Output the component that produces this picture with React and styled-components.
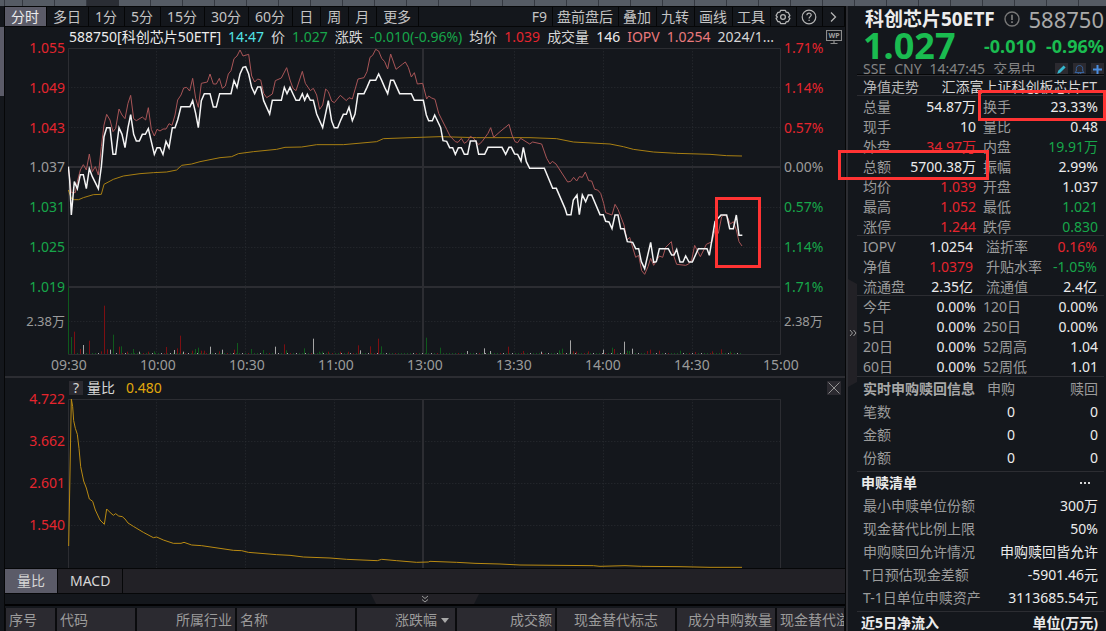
import React from "react";
import styled, { createGlobalStyle } from "styled-components";

const c = {
  bg: "#14171c",
  panel: "#222126",
  cell: "#2b2a30",
  active: "#5b5b68",
  line: "#2c2d32",
  grid: "#2a2d32",
  text: "#d6d6d6",
  white: "#ececec",
  dim: "#9b9b9b",
  red: "#e5252e",
  green: "#17a64a",
  cyan: "#52e4e6",
  pink: "#ea7a7c",
  gold: "#e0a80c",
  mark: "#ff3333",
};

const Global = createGlobalStyle`
  * { box-sizing: border-box; }
  body {
    margin: 0;
    background: ${c.bg};
    color: ${c.text};
    font: 14px/20px "Noto Sans", "Noto Sans CJK SC", sans-serif;
    overflow: hidden;
  }
  button { font: inherit; color: inherit; border: 0; background: none; padding: 0; margin: 0; }
  table { border-collapse: collapse; border-spacing: 0; }
  th { font-weight: 400; }
  svg { display: block; }
`;

const Page = styled.div`
  height: 100vh;
  display: flex;
  flex-direction: column;
  overflow: hidden;
`;

const TopStrip = styled.div`
  flex: none;
  height: 6px;
  background: linear-gradient(90deg, transparent 87px, #2a2d34 87px, #2a2d34 119px, transparent 119px),
    repeating-linear-gradient(90deg, #343840 0 1px, #555b64 1px 32px) 22px 0;
`;

const Workspace = styled.div`
  flex: 1;
  min-height: 0;
  display: flex;
`;

const EdgeRail = styled.div`
  flex: none;
  width: 5px;
  padding-top: 21px;
  border-right: 1px solid #060708;
`;

const RailThumb = styled.div`
  height: 69px;
  background: ${c.active};
`;

const Main = styled.main`
  flex: 1;
  min-width: 0;
  display: flex;
  flex-direction: column;
`;

const Toolbar = styled.nav`
  flex: none;
  height: 21px;
  display: flex;
  justify-content: space-between;
  border-top: 1px solid #060708;
  border-bottom: 1px solid #060708;
`;

const ToolGroup = styled.div`
  display: flex;
`;

const ToolButton = styled.button`
  display: flex;
  align-items: center;
  justify-content: center;
  white-space: nowrap;
  line-height: 19px;
  padding: 0 ${(p) => (p.$tight ? "5px 0 4px" : "7px 0 6px")};
  border-right: 1px solid #050607;
  color: ${(p) => (p.$active ? c.white : "#c4c4c4")};
  background: ${(p) => (p.$active ? c.active : "transparent")};
`;

const InfoBar = styled.header`
  flex: none;
  height: 21px;
  display: flex;
  align-items: center;
  justify-content: space-between;
  padding: 0 3px 2px 64px;
`;

const InfoItems = styled.div`
  display: flex;
  gap: 7px;
  white-space: nowrap;
`;

const Tone = styled.span`
  color: ${(p) => c[p.$tone] || c.text};
`;

const ChartRow = styled.section`
  flex: none;
  display: grid;
  grid-template-columns: 63px minmax(0, 1fr) 63px;
  height: ${(p) => p.$height}px;
`;

const Plot = styled.div`
  position: relative;
  height: 100%;
`;

const PlotSvg = styled.svg`
  width: 100%;
  height: 100%;
  path, line, polyline { vector-effect: non-scaling-stroke; fill: none; }
`;

const AxisColumn = styled.div`
  margin-top: -7px;
  padding: ${(p) => (p.$side === "left" ? "0 3px 0 0" : "0 0 0 2px")};
  text-align: ${(p) => (p.$side === "left" ? "right" : "left")};
  line-height: 14px;
`;

const AxisScale = styled.div`
  height: ${(p) => p.$height}px;
  display: flex;
  flex-direction: column;
  justify-content: space-between;
`;

const VolumeLabel = styled.div`
  margin-top: 20px;
  font-size: 13px;
  color: ${c.dim};
`;

const TimeAxis = styled.div`
  flex: none;
  height: 21px;
  line-height: 19px;
  display: flex;
  justify-content: space-between;
  padding: 0 44px;
  color: ${c.dim};
  span { width: 40px; text-align: center; }
`;

const Marker = styled.div`
  position: absolute;
  left: ${(p) => p.$left};
  top: ${(p) => p.$top}px;
  width: ${(p) => p.$width}px;
  height: ${(p) => p.$height}px;
  border: 3px solid ${c.mark};
  pointer-events: none;
`;

const IndicatorBar = styled.header`
  flex: none;
  height: 23px;
  display: flex;
  align-items: center;
  padding: 0 4px 1px 64px;
  border-top: 2px solid ${c.line};
`;

const SmallButton = styled.button`
  width: 14px;
  height: 14px;
  display: grid;
  place-items: center;
  line-height: 14px;
  background: ${c.cell};
`;

const IndicatorName = styled.span`
  margin: 0 11px 0 4px;
`;

const Spacer = styled.span`
  flex: 1;
`;

const TabBar = styled.div`
  flex: none;
  height: 26px;
  display: flex;
  background: ${c.panel};
  border-top: 1px solid #060708;
  border-bottom: 1px solid #060708;
`;

const Tab = styled.button`
  padding: 0 12px;
  border-right: 1px solid #060708;
  background: ${(p) => (p.$active ? c.active : "transparent")};
`;

const HandleRow = styled.div`
  flex: none;
  height: 12px;
  display: flex;
  justify-content: center;
  border-bottom: 2px solid #020203;
`;

const Handle = styled.button`
  width: 108px;
  height: 10px;
  display: grid;
  place-items: center;
  background: ${c.panel};
  clip-path: polygon(0 0, 100% 0, calc(100% - 5px) 100%, 5px 100%);
`;

const HoldingsWrap = styled.div`
  flex: 1;
  min-height: 25px;
  overflow: hidden;
  padding-top: 2px;
`;

const Holdings = styled.table`
  width: 100%;
  table-layout: fixed;
  border-collapse: separate;
  th {
    height: 23px;
    padding: 0 3px;
    overflow: hidden;
    white-space: nowrap;
    color: ${c.dim};
    background: ${c.cell};
    background-clip: padding-box;
    border: 1px solid #0a0b0d;
    border-width: 0 1px;
  }
`;

const Column = styled.col`
  width: ${(p) => (p.$width ? `${p.$width}px` : "auto")};
`;

const HeadCell = styled.th`
  text-align: ${(p) => p.$align || "left"};
`;

const SortMark = styled.svg`
  display: inline;
`;

const Sidebar = styled.aside`
  flex: none;
  position: relative;
  width: 261px;
  display: flex;
  border-left: 1px solid #060708;
`;

const Gutter = styled.div`
  flex: none;
  width: 11px;
  padding-top: 273px;
  border-left: 2px solid ${c.line};
`;

const CollapseButton = styled.button`
  width: 9px;
  height: 108px;
  display: grid;
  place-items: center;
  background: ${c.panel};
  clip-path: polygon(0 0, 100% 5px, 100% calc(100% - 5px), 0 100%);
`;

const Quote = styled.div`
  flex: 1;
  min-width: 0;
  padding-right: 2px;
`;

const QuoteHead = styled.header`
  height: 69px;
  padding-left: 6px;
  overflow: hidden;
  border-bottom: 1px solid #060708;
`;

const HeadLine = styled.div`
  display: flex;
  align-items: center;
  justify-content: space-between;
  white-space: nowrap;
  height: ${(p) => p.$height}px;
  padding-left: ${(p) => p.$inset || 0}px;
`;

const FundName = styled.h1`
  margin: 0;
  font-size: 19px;
  line-height: 26px;
  color: ${c.white};
`;

const FundCode = styled.span`
  font-size: 22px;
  line-height: 26px;
  color: #a9a9a9;
`;

const Price = styled.strong`
  margin-right: auto;
  font-size: 36px;
  line-height: 26px;
  color: #1abc50;
`;

const Change = styled.strong`
  margin-left: 10px;
  font-size: 18px;
  line-height: 26px;
  color: #1abc50;
`;

const Status = styled.div`
  display: flex;
  gap: 8px;
  color: #858585;
`;

const IconRow = styled.div`
  display: flex;
  gap: 5px;
`;

const IconButton = styled.button`
  width: 13px;
  height: 13px;
  display: grid;
  place-items: center;
  background: ${c.cell};
`;

const TrendRow = styled.div`
  display: flex;
  justify-content: space-between;
  height: 20px;
  padding: 1px 7px 0 6px;
  overflow: hidden;
  white-space: nowrap;
  color: #b4b4b4;
  border-top: 1px solid ${c.line};
`;

const Block = styled.section`
  border-top: 1px solid ${c.line};
  margin-top: ${(p) => (p.$joined ? -1 : 0)}px;
  padding: 0 6px ${(p) => p.$after || 0}px;
`;

const ListBlock = styled.section`
  padding: 0 6px 2px;
`;

const DataTable = styled.table`
  width: 100%;
  table-layout: fixed;
  th, td { padding: 0; white-space: nowrap; height: ${(p) => p.$row}px; line-height: 19px; }
  th { text-align: left; color: ${c.dim}; }
  td { text-align: right; }
`;

const Label = styled.th`
  && { padding-left: ${(p) => p.$inset || 0}px; }
`;

const Value = styled.td`
  color: ${(p) => c[p.$tone] || c.white};
  && { padding-right: ${(p) => p.$inset || 0}px; }
`;

const StrongHead = styled.th`
  && { font-weight: 700; color: #a8a8a8; }
`;

const RightHead = styled.th`
  && { text-align: right; }
`;

const SectionTitle = styled.div`
  display: flex;
  align-items: center;
  justify-content: space-between;
  height: 23px;
  padding: 0 6px 0 4px;
  font-weight: 700;
  color: ${c.white};
  border-top: 1px solid ${c.line};
`;

const MoreButton = styled.button`
  margin-right: 8px;
`;

const periods = ["分时", "多日", "1分", "5分", "15分", "30分", "60分", "日", "周", "月", "更多"];
const tools = ["F9", "盘前盘后", "叠加", "九转", "画线", "工具"];

const infoItems = [
  ["588750[科创芯片50ETF]", "white"],
  ["14:47", "cyan"],
  ["价"],
  ["1.027", "green"],
  ["涨跌"],
  ["-0.010(-0.96%)", "green"],
  ["均价"],
  ["1.039", "red"],
  ["成交量"],
  ["146", "white"],
  ["IOPV", "pink"],
  ["1.0254", "pink"],
  ["2024/1..."],
];

const priceTicks = [
  ["1.055", "1.71%", "red"],
  ["1.049", "1.14%", "red"],
  ["1.043", "0.57%", "red"],
  ["1.037", "0.00%", "dim"],
  ["1.031", "0.57%", "green"],
  ["1.025", "1.14%", "green"],
  ["1.019", "1.71%", "green"],
];

const times = ["09:30", "10:00", "10:30", "11:00", "13:00", "13:30", "14:00", "14:30", "15:00"];

const columns = [
  ["序号", 51],
  ["代码", 80],
  ["所属行业", 100, "right"],
  ["名称", 120],
  ["涨跌幅", 100, "right"],
  ["成交额", 100, "right"],
  ["现金替代标志", 120, "center"],
  ["成分申购数量", 100, "right"],
  ["现金替代溢价比例", 0],
];

const quoteRows = [
  ["总量", "54.87万", "white", "换手", "23.33%", "white"],
  ["现手", "10", "white", "量比", "0.48", "white"],
  ["外盘", "34.97万", "red", "内盘", "19.91万", "green"],
  ["总额", "5700.38万", "white", "振幅", "2.99%", "white"],
  ["均价", "1.039", "red", "开盘", "1.037", "white"],
  ["最高", "1.052", "red", "最低", "1.021", "green"],
  ["涨停", "1.244", "red", "跌停", "0.830", "green"],
];
const navRows = [
  ["IOPV", "1.0254", "white", "溢折率", "0.16%", "red"],
  ["净值", "1.0379", "red", "升贴水率", "-1.05%", "green"],
  ["流通盘", "2.35亿", "white", "流通值", "2.4亿", "white"],
];
const returnRows = [
  ["今年", "0.00%", "white", "120日", "0.00%", "white"],
  ["5日", "0.00%", "white", "250日", "0.00%", "white"],
  ["20日", "0.00%", "white", "52周高", "1.04", "white"],
  ["60日", "0.00%", "white", "52周低", "1.01", "white"],
];
const listRows = [
  ["最小申赎单位份额", "300万"],
  ["现金替代比例上限", "50%"],
  ["申购赎回允许情况", "申购赎回皆允许"],
  ["T日预估现金差额", "-5901.46元"],
  ["T-1日单位申赎资产", "3113685.54元"],
];

// Chart space uses three units per pixel.
const pricePoints =
  "205,500 209,540 214,645 218,600 223,545 232,566 241,524 250,524 259,566 268,506 277,530 295,566 304,500 312,410 320,383 330,383 339,463 347,463 357,383 366,403 375,443 384,383 392,344 401,403 409,423 418,423 427,403 436,403 445,386 454,425 463,463 471,443 480,443 489,463 498,424 507,443 517,383 525,383 533,360 543,320 570,320 578,302 587,340 595,383 604,302 613,281 630,281 640,321 649,321 659,281 693,281 702,242 711,262 720,222 729,202 737,200 746,222 755,262 764,281 773,261 782,261 791,302 800,322 809,342 817,301 844,301 853,262 861,281 870,262 879,282 888,301 898,301 907,281 914,301 922,283 931,301 940,301 950,342 968,383 977,340 985,302 995,363 1003,383 1013,383 1021,363 1030,343 1039,343 1047,322 1057,362 1065,342 1074,281 1092,281 1101,262 1110,241 1127,241 1136,222 1145,241 1154,262 1163,281 1172,241 1181,241 1199,281 1234,281 1243,301 1270,301 1279,345 1286,362 1297,362 1304,345 1322,383 1329,422 1340,424 1349,443 1358,443 1366,463 1375,443 1384,443 1393,463 1403,463 1411,423 1428,423 1436,463 1454,463 1464,442 1506,442 1517,463 1527,442 1534,442 1544,462 1553,463 1563,483 1570,442 1579,485 1589,505 1633,505 1658,565 1669,565 1695,625 1701,644 1713,644 1720,600 1731,585 1738,644 1747,585 1757,605 1765,585 1775,585 1800,644 1810,644 1817,664 1827,666 1836,686 1845,645 1854,645 1862,686 1872,686 1882,725 1898,727 1907,746 1916,746 1924,785 1934,806 1952,727 1961,787 1969,785 1978,746 2005,746 2015,765 2022,765 2030,748 2040,786 2049,786 2057,768 2067,786 2077,786 2095,746 2121,746 2128,766 2145,665 2163,645 2180,645 2189,686 2200,686 2209,645 2217,706 2227,706";
const iopvPoints =
  "205,500 214,578 226,578 232,545 241,510 250,494 259,510 268,462 277,515 286,500 295,525 304,440 312,375 320,343 330,360 339,395 347,385 357,327 366,345 375,356 384,310 392,286 401,356 409,362 427,351 437,360 445,323 454,388 463,408 471,388 480,393 489,387 498,387 507,371 516,376 525,345 533,300 543,285 551,264 560,262 569,273 578,235 587,295 595,322 604,250 622,246 630,222 640,252 649,252 658,235 667,265 676,258 685,222 693,212 702,176 711,168 720,150 729,168 746,163 755,228 764,246 773,237 782,240 791,280 800,293 817,282 826,242 844,234 860,203 870,240 879,265 888,272 907,214 916,250 931,272 940,265 950,285 959,328 968,315 977,267 985,275 995,303 1003,308 1021,286 1039,302 1047,293 1057,297 1074,237 1092,233 1101,215 1110,172 1118,166 1127,148 1136,153 1145,175 1154,185 1163,207 1172,162 1188,208 1207,193 1216,186 1225,202 1234,231 1243,218 1252,252 1268,250 1280,297 1286,288 1295,294 1305,298 1316,340 1340,388 1350,408 1366,425 1374,427 1384,415 1393,430 1402,424 1411,409 1420,414 1436,434 1446,425 1464,400 1472,383 1481,412 1500,395 1527,373 1536,405 1545,425 1553,428 1562,415 1589,432 1598,426 1625,432 1640,475 1650,492 1657,484 1668,492 1703,546 1712,544 1721,532 1730,543 1738,530 1747,532 1756,516 1766,542 1775,543 1784,568 1793,570 1802,580 1811,610 1817,638 1836,645 1845,613 1854,628 1872,675 1881,720 1889,712 1907,772 1916,766 1925,812 1934,823 1944,800 1952,775 1961,796 1978,768 1988,772 1997,742 2014,725 2022,770 2030,793 2057,796 2066,792 2075,780 2084,736 2101,770 2112,748 2119,733 2136,725 2145,690 2155,700 2165,650 2172,645 2182,650 2191,672 2200,665 2209,690 2217,725 2226,738";
const averagePoints =
  "205,570 214,595 223,599 236,599 250,593 280,584 304,583 312,553 340,538 370,528 420,521 460,518 500,516 530,510 545,496 575,492 600,485 660,473 695,470 715,461 760,455 830,448 855,442 905,441 950,434 1030,434 1130,425 1150,416 1260,412 1320,410 1430,413 1590,413 1670,416 1720,426 1830,432 1870,440 1900,448 1960,456 2030,460 2130,463 2180,467 2226,468";
const ratioPoints =
  "206,1638 209,1473 214,1197 218,1220 221,1262 226,1285 232,1303 237,1345 242,1400 251,1443 259,1464 268,1497 278,1504 286,1530 300,1560 313,1573 320,1527 330,1537 340,1546 347,1541 356,1548 367,1550 375,1557 384,1569 400,1579 430,1597 460,1613 470,1611 490,1620 520,1630 543,1630 552,1627 575,1635 605,1637 700,1651 725,1652 745,1657 830,1664 870,1666 910,1671 990,1674 1040,1678 1132,1682 1145,1678 1190,1682 1250,1687 1285,1686 1290,1684 1370,1687 1425,1690 1500,1692 1560,1695 1780,1697 1800,1699 1875,1697 1925,1699 2040,1700 2130,1702 2226,1702";

const volumeBars =
  "205g200 214g51 223r67 241r15 250w27 268r40 304r8 313r145 322r14 331w13 339g58 357r22 364g23 382r7 400g15 418w7 445r7 463g8 499r21 524w12 533r17 542r55 551w7 578r10 587g15 595g19 604r10 613r10 631w22 659r8 668w13 703r13 711g33 754g15 790g12 826w22 853r29 860g11 914g17 940w46 958g7 967g7 985r7 1021r7 1045r7 1075r26 1082w11 1110r23 1136r46 1145g23 1279g49 1322g19 1402w9 1454w17 1472w9 1526r22 1570r9 1625w7 1677g11 1686g16 1712w41 1721r8 1730r7 1765r8 1810w13 1837g19 1844r15 1873w37 1881g10 1889g9 1898w16 1943r9 1952r13 1978r10 2042g10 2085r6 2138r8 2165r14 2191g7"
    .split(" ")
    .map((s) => {
      const [, x, tone, h] = s.match(/(\d+)([grw])(\d+)/);
      return { x: +x, tone, h: +h };
    });
const barTone = { g: "#0f5a1c", r: "#7d0f12", w: "#a5a5a5" };
const quietBars = Array.from({ length: 224 }, (_, i) => ({
  x: 214 + i * 9,
  h: 3,
  tone: i % 7 === 3 ? "r" : i % 5 === 1 ? "g" : i % 3 === 0 ? "w" : "g",
}));

const gridX = [469.5, 736.5, 1003.5, 1543.5, 1810.5, 2077.5];

function Verticals({ top, bottom }) {
  return (
    <>
      {gridX.map((x) => (
        <line key={x} x1={x} x2={x} y1={top} y2={bottom} stroke={c.grid} strokeDasharray="1 2" />
      ))}
      <line x1="205.5" x2="205.5" y1={top} y2={bottom} stroke={c.line} />
      <line x1="2341.5" x2="2341.5" y1={top} y2={bottom} stroke={c.line} />
      <line x1="1269" x2="1269" y1={top} y2={bottom} stroke={c.line} strokeWidth="2" />
    </>
  );
}

function PriceChart() {
  return (
    <PlotSvg viewBox="204 144 2142 921" preserveAspectRatio="none" role="img" aria-label="分时走势">
      {[262.5, 382.5, 622.5, 742.5, 964.5].map((y) => (
        <line key={y} x1="205" x2="2342" y1={y} y2={y} stroke={c.grid} strokeDasharray="1 2" />
      ))}
      <line x1="205" x2="2342" y1="145.5" y2="145.5" stroke={c.line} />
      <line x1="205" x2="2342" y1="501" y2="501" stroke={c.line} strokeWidth="2" />
      <line x1="205" x2="2342" y1="861" y2="861" stroke={c.line} strokeWidth="2" />
      <line x1="205" x2="2342" y1="1063.5" y2="1063.5" stroke={c.line} />
      <Verticals top="145" bottom="1064" />
      {[...quietBars, ...volumeBars].map((b, i) => (
        <rect key={i} x={Math.floor(b.x / 3) * 3} y={1062 - b.h} width={3} height={b.h} fill={barTone[b.tone]} />
      ))}
      <polyline points={averagePoints} stroke="#a87f12" />
      <polyline points={iopvPoints} stroke="#a85557" />
      <polyline points={pricePoints} stroke="#f4f4f4" strokeWidth="1.5" />
    </PlotSvg>
  );
}

function RatioChart() {
  return (
    <PlotSvg viewBox="204 1197 2142 507" preserveAspectRatio="none" role="img" aria-label="量比走势">
      {[1324.5, 1450.5, 1576.5].map((y) => (
        <line key={y} x1="205" x2="2342" y1={y} y2={y} stroke={c.grid} strokeDasharray="1 2" />
      ))}
      <line x1="205" x2="2342" y1="1198.5" y2="1198.5" stroke={c.line} />
      <Verticals top="1198" bottom="1704" />
      <polyline points={ratioPoints} stroke="#b98a12" />
    </PlotSvg>
  );
}

const GearIcon = () => (
  <svg width="16" height="16" viewBox="0 0 16 16" fill="none" stroke="#b4b4b4" strokeWidth="1.3" strokeLinejoin="round">
    <path d="M5.6 1.4h4.8l.8 1.8 2 .3 1.7 3-1.2 1.5 1.2 1.5-1.7 3-2 .3-.8 1.800H5.600l-.8-1.800-2-.3-1.700-3L2.300 8 1.100 6.500l1.700-3 2-.3z" />
    <circle cx="8" cy="8" r="2.400" />
  </svg>
);

const HelpIcon = () => (
  <svg width="16" height="16" viewBox="0 0 16 16" fill="none" stroke="#b4b4b4" strokeWidth="1.2">
    <circle cx="8" cy="8" r="6.800" />
    <path d="M5.900 6.300c0-2.900 4.300-2.800 4.300-.2 0 1.500-2.100 1.600-2.100 3.300M8.100 10.700v1.300" />
  </svg>
);

const ChevronIcon = () => (
  <svg width="12" height="14" viewBox="0 0 12 14" fill="none" stroke="#b4b4b4" strokeWidth="1.300">
    <path d="M4 2.500 8.500 7 4 11.500" />
  </svg>
);

const MonitorIcon = () => (
  <svg width="16" height="16" viewBox="0 0 16 16">
    <path d="M.5 1.500h15v10H.5zM4.500 14.500h7M8 12v2" fill="none" stroke="#8c8c8c" strokeWidth="1.200" />
    <text x="8" y="9" textAnchor="middle" fontSize="7" fontWeight="700" fill="#a0a0a0">WP</text>
  </svg>
);

const CloseIcon = () => (
  <svg width="14" height="14" viewBox="0 0 14 14" stroke="#929292">
    <path d="M1.500 1.500l11 11M12.500 1.500l-11 11" />
  </svg>
);

const InfoIcon = () => (
  <svg width="16" height="16" viewBox="0 0 16 16" fill="none" stroke="#777" strokeWidth="1.400">
    <circle cx="8" cy="8" r="7" />
    <path d="M8 3.700v5.200M8 10.300v1.700" strokeWidth="1.800" />
  </svg>
);

const PencilIcon = () => (
  <svg width="11" height="11" viewBox="0 0 11 11">
    <path d="M1.200 9.800l1-3L7.600 1.400l2 2L4.200 8.800z" fill="#35b8cf" />
  </svg>
);

const BellIcon = () => (
  <svg width="11" height="11" viewBox="0 0 11 11" fill="none" stroke="#37639e">
    <path d="M1 8.500h9L8.700 7V4.500c0-4-6.400-4-6.400 0V7zM4 9c0 1.700 3 1.700 3 0" />
  </svg>
);

const PlusIcon = () => (
  <svg width="11" height="11" viewBox="0 0 11 11" stroke="#4b8ee0" strokeWidth="2">
    <path d="M5.500 1v9M1 5.500h9" />
  </svg>
);

const DotsIcon = () => (
  <svg width="10" height="4" viewBox="0 0 10 4" fill="#d6d6d6">
    <path d="M0 1h2v2H0zM4 1h2v2H4zM8 1h2v2H8z" />
  </svg>
);

function PairTable({ rows, inset = 0 }) {
  return (
    <DataTable $row={20}>
      <colgroup>
        <Column $width={44} />
        <Column $width={69} />
        <Column />
        <Column $width={52} />
      </colgroup>
      <tbody>
        {rows.map(([l1, v1, t1, l2, v2, t2]) => (
          <tr key={l1}>
            <Label scope="row">{l1}</Label>
            <Value $tone={t1} $inset={inset}>{v1}</Value>
            <Label scope="row" $inset={inset ? 10 : 7}>{l2}</Label>
            <Value $tone={t2} $inset={inset ? 1 : 0}>{v2}</Value>
          </tr>
        ))}
      </tbody>
    </DataTable>
  );
}

export default function App() {
  return (
    <Page>
      <Global />
      <TopStrip />
      <Workspace>
        <EdgeRail>
          <RailThumb />
        </EdgeRail>
        <Main>
          <Toolbar>
            <ToolGroup>
              {periods.map((p, i) => (
                <ToolButton key={p} $active={i === 0}>{p}</ToolButton>
              ))}
            </ToolGroup>
            <ToolGroup>
              {tools.map((t) => (
                <ToolButton key={t} $tight>{t}</ToolButton>
              ))}
              <ToolButton $tight aria-label="设置"><GearIcon /></ToolButton>
              <ToolButton $tight aria-label="帮助"><HelpIcon /></ToolButton>
              <ToolButton $tight aria-label="展开"><ChevronIcon /></ToolButton>
            </ToolGroup>
          </Toolbar>

          <InfoBar>
            <InfoItems>
              {infoItems.map(([t, tone]) => (
                <Tone key={t} $tone={tone}>{t}</Tone>
              ))}
            </InfoItems>
            <MonitorIcon />
          </InfoBar>

          <ChartRow $height={307}>
            <AxisColumn $side="left">
              <AxisScale $height={253}>
                {priceTicks.map(([v, , tone]) => (
                  <Tone key={v} $tone={tone}>{v}</Tone>
                ))}
              </AxisScale>
              <VolumeLabel>2.38万</VolumeLabel>
            </AxisColumn>
            <Plot>
              <PriceChart />
              <Marker $left="calc(100% - 67px)" $top={149} $width={46} $height={71} />
            </Plot>
            <AxisColumn $side="right">
              <AxisScale $height={253}>
                {priceTicks.map(([v, p, tone]) => (
                  <Tone key={v} $tone={tone}>{p}</Tone>
                ))}
              </AxisScale>
              <VolumeLabel>2.38万</VolumeLabel>
            </AxisColumn>
          </ChartRow>
          <TimeAxis>
            {times.map((t) => (
              <span key={t}>{t}</span>
            ))}
          </TimeAxis>

          <IndicatorBar>
            <SmallButton aria-label="指标说明">?</SmallButton>
            <IndicatorName>量比</IndicatorName>
            <Tone $tone="gold">0.480</Tone>
            <Spacer />
            <SmallButton aria-label="关闭"><CloseIcon /></SmallButton>
          </IndicatorBar>
          <ChartRow $height={169}>
            <AxisColumn $side="left">
              <AxisScale $height={140}>
                {["4.722", "3.662", "2.601", "1.540"].map((v) => (
                  <Tone key={v} $tone="red">{v}</Tone>
                ))}
              </AxisScale>
            </AxisColumn>
            <Plot>
              <RatioChart />
            </Plot>
          </ChartRow>

          <TabBar>
            <Tab $active>量比</Tab>
            <Tab>MACD</Tab>
          </TabBar>
          <HandleRow>
            <Handle aria-label="收起">
              <svg width="8" height="8" viewBox="0 0 8 8" fill="none" stroke="#9b9b9b">
                <path d="M1 1l3 2.500L7 1M1 4.500L4 7l3-2.500" />
              </svg>
            </Handle>
          </HandleRow>
          <HoldingsWrap>
            <Holdings>
              <colgroup>
                {columns.map(([name, w]) => (
                  <Column key={name} $width={w} />
                ))}
              </colgroup>
              <thead>
                <tr>
                  {columns.map(([name, , align]) => (
                    <HeadCell key={name} scope="col" $align={align}>
                      {name}
                      {name === "涨跌幅" && (
                        <SortMark width="15" height="8" viewBox="0 0 15 8">
                          <path d="M4 1h8L8 6z" fill="#a8a8a8" />
                        </SortMark>
                      )}
                    </HeadCell>
                  ))}
                </tr>
              </thead>
            </Holdings>
          </HoldingsWrap>
        </Main>

        <Sidebar>
          <Gutter>
            <CollapseButton aria-label="收起侧栏">
              <svg width="8" height="8" viewBox="0 0 8 8" fill="none" stroke="#9b9b9b">
                <path d="M1 1l2.500 3L1 7M4.500 1L7 4 4.500 7" />
              </svg>
            </CollapseButton>
          </Gutter>
          <Quote>
            <QuoteHead>
              <HeadLine $height={26} $inset={2}>
                <FundName>科创芯片50ETF</FundName>
                <InfoIcon />
                <FundCode>588750</FundCode>
              </HeadLine>
              <HeadLine $height={27}>
                <Price>1.027</Price>
                <Change>-0.010</Change>
                <Change>-0.96%</Change>
              </HeadLine>
              <HeadLine $height={20}>
                <Status>
                  <span>SSE</span>
                  <span>CNY</span>
                  <span>14:47:45</span>
                  <span>交易中</span>
                </Status>
                <IconRow>
                  <IconButton aria-label="编辑"><PencilIcon /></IconButton>
                  <IconButton aria-label="提醒"><BellIcon /></IconButton>
                  <IconButton aria-label="添加"><PlusIcon /></IconButton>
                </IconRow>
              </HeadLine>
            </QuoteHead>
            <TrendRow>
              <span>净值走势</span>
              <Tone>汇添富上证科创板芯片ET</Tone>
            </TrendRow>
            <Block>
              <PairTable rows={quoteRows} />
            </Block>
            <Block $joined>
              <PairTable rows={navRows} inset={3} />
            </Block>
            <Block $joined>
              <PairTable rows={returnRows} />
            </Block>
            <Block $after={2}>
              <DataTable $row={23}>
                <colgroup>
                  <Column $width={115} />
                  <Column $width={37} />
                  <Column />
                </colgroup>
                <thead>
                  <tr>
                    <StrongHead scope="col">实时申购赎回信息</StrongHead>
                    <RightHead scope="col">申购</RightHead>
                    <RightHead scope="col">赎回</RightHead>
                  </tr>
                </thead>
                <tbody>
                  {["笔数", "金额", "份额"].map((n) => (
                    <tr key={n}>
                      <Label scope="row">{n}</Label>
                      <Value>0</Value>
                      <Value>0</Value>
                    </tr>
                  ))}
                </tbody>
              </DataTable>
            </Block>
            <SectionTitle>
              <span>申赎清单</span>
              <MoreButton aria-label="更多"><DotsIcon /></MoreButton>
            </SectionTitle>
            <ListBlock>
              <DataTable $row={23}>
                <tbody>
                  {listRows.map(([l, v]) => (
                    <tr key={l}>
                      <Label scope="row">{l}</Label>
                      <Value>{v}</Value>
                    </tr>
                  ))}
                </tbody>
              </DataTable>
            </ListBlock>
            <SectionTitle>
              <span>近5日净流入</span>
              <span>单位(万元)</span>
            </SectionTitle>
          </Quote>
          <Marker $left="132px" $top={84} $width={128} $height={31} />
          <Marker $left="-8px" $top={144} $width={151} $height={30} />
        </Sidebar>
      </Workspace>
    </Page>
  );
}
